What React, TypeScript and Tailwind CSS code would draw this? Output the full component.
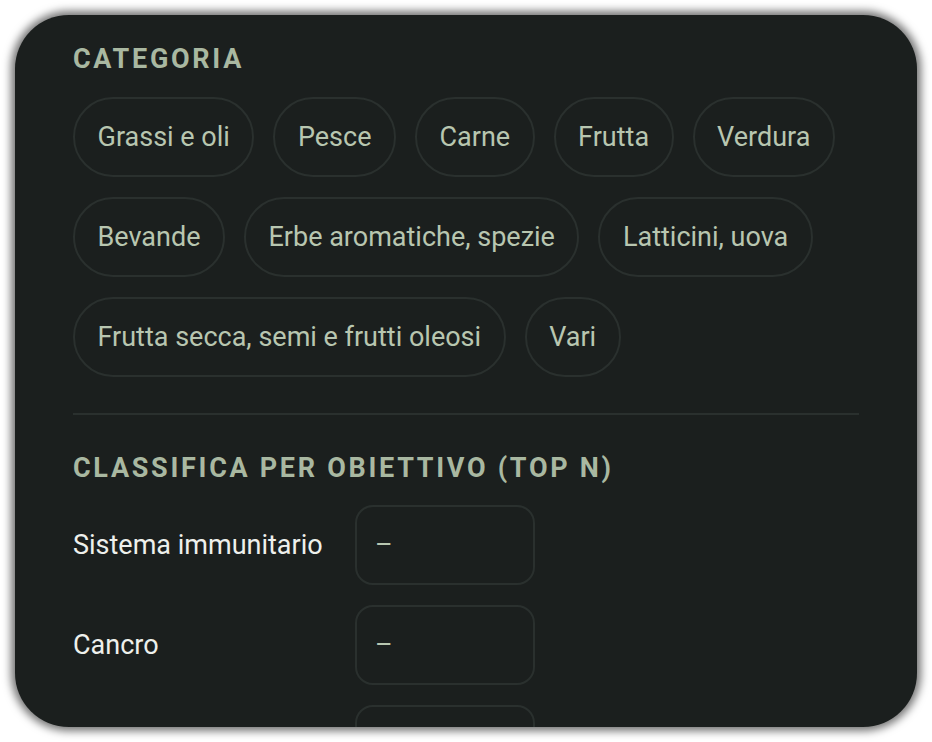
const categories = [
  'Grassi e oli',
  'Pesce',
  'Carne',
  'Frutta',
  'Verdura',
  'Bevande',
  'Erbe aromatiche, spezie',
  'Latticini, uova',
  'Frutta secca, semi e frutti oleosi',
  'Vari',
];

const goals = ['Sistema immunitario', 'Cancro', 'Cuore'];

export default function App() {
  return (
    <div className="h-[742px] w-[932px] bg-white p-[15px] font-['Roboto',sans-serif]">
      <div className="h-full overflow-hidden rounded-[54px] bg-[#1b1f1e] px-[58px] pt-[24px] shadow-[0_0_8px_4px_rgba(0,0,0,0.55)]">
        {/* Categoria */}
        <h2 className="text-[27px] font-bold uppercase leading-[40px] tracking-[0.1em] text-[#a9b8a1]">
          Categoria
        </h2>
        <div className="mt-[18px] flex flex-wrap gap-x-[19px] gap-y-[20px]">
          {categories.map((c) => (
            <button
              key={c}
              className="h-[80px] rounded-full border-2 border-[#2a302e] px-[22.5px] text-[27px] text-[#b8c6b0]"
            >
              {c}
            </button>
          ))}
        </div>

        <div className="mt-[36px] h-[2px] bg-[#2a302e]" />

        {/* Classifica */}
        <h2 className="mt-[33px] text-[27px] font-bold uppercase leading-[40px] tracking-[0.1em] text-[#a9b8a1]">
          Classifica per obiettivo (top N)
        </h2>
        <div className="mt-[17px] flex flex-col gap-[20px]">
          {goals.map((g) => (
            <div key={g} className="flex items-center">
              <span className="w-[282px] text-[27px] text-[#eef0ec]">{g}</span>
              <div className="flex h-[80px] w-[180px] items-center rounded-[18px] border-2 border-[#2a302e] px-[18px] text-[27px] text-[#b8c6b0]">
                –
              </div>
            </div>
          ))}
        </div>
      </div>
    </div>
  );
}
